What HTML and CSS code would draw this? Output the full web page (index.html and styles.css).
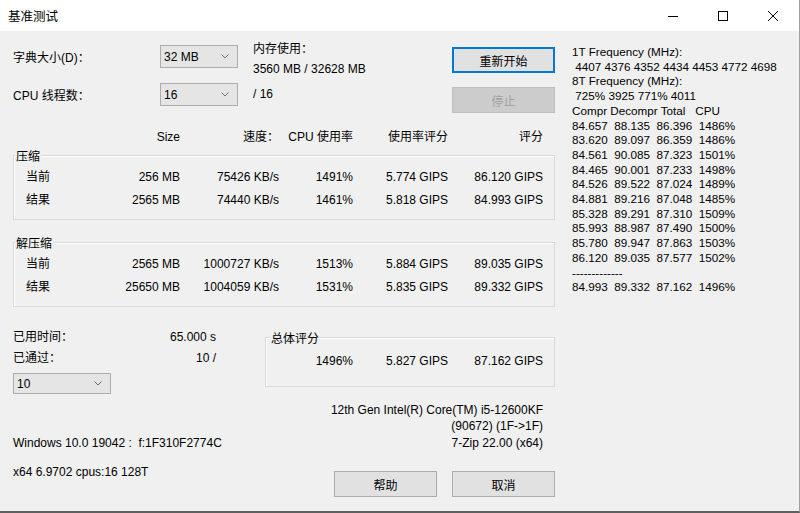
FILE: index.html
```html
<!DOCTYPE html>
<html lang="zh-CN">
<head>
    <meta charset="UTF-8">
    <title>基准测试</title>
    <link rel="stylesheet" href="styles.css">
</head>
<body>
<div class="window">
    <div class="titlebar">
        <span class="title">基准测试</span>
        <div class="caption-buttons">
            <span class="cap-btn">
                <svg width="10" height="10" viewBox="0 0 10 10"><path d="M0 5.5h10" stroke="#000" stroke-width="1"/></svg>
            </span>
            <span class="cap-btn">
                <svg width="10" height="10" viewBox="0 0 10 10"><rect x="0.5" y="0.5" width="9" height="9" fill="none" stroke="#000" stroke-width="1"/></svg>
            </span>
            <span class="cap-btn">
                <svg width="10" height="10" viewBox="0 0 10 10"><path d="M0 0L10 10M10 0L0 10" stroke="#000" stroke-width="1"/></svg>
            </span>
        </div>
    </div>

    <div class="client">
        <div class="main">
            <div class="top">
                <div class="settings">
                    <div class="setting">
                        <span class="setting-label">字典大小(D)：</span>
                        <div class="combo">
                            <span>32 MB</span>
                            <svg width="8" height="5" viewBox="0 0 8 5"><path d="M0.5 0.5L4 4L7.5 0.5" fill="none" stroke="#707070"/></svg>
                        </div>
                    </div>
                    <div class="setting">
                        <span class="setting-label">CPU 线程数：</span>
                        <div class="combo">
                            <span>16</span>
                            <svg width="8" height="5" viewBox="0 0 8 5"><path d="M0.5 0.5L4 4L7.5 0.5" fill="none" stroke="#707070"/></svg>
                        </div>
                    </div>
                </div>
                <div class="info">
                    <div>内存使用：</div>
                    <div>3560 MB / 32628 MB</div>
                    <div class="threads">/ 16</div>
                </div>
                <div class="actions">
                    <button class="btn btn-default">重新开始</button>
                    <button class="btn" disabled>停止</button>
                </div>
            </div>

            <div class="grid-row table-head">
                <span></span>
                <span>Size</span>
                <span>速度：</span>
                <span>CPU 使用率</span>
                <span>使用率评分</span>
                <span>评分</span>
            </div>

            <div class="group group-compress">
                <span class="legend">压缩</span>
                <div class="grid-row">
                    <span>当前</span>
                    <span>256 MB</span>
                    <span>75426 KB/s</span>
                    <span>1491%</span>
                    <span>5.774 GIPS</span>
                    <span>86.120 GIPS</span>
                </div>
                <div class="grid-row">
                    <span>结果</span>
                    <span>2565 MB</span>
                    <span>74440 KB/s</span>
                    <span>1461%</span>
                    <span>5.818 GIPS</span>
                    <span>84.993 GIPS</span>
                </div>
            </div>

            <div class="group group-decompress">
                <span class="legend">解压缩</span>
                <div class="grid-row">
                    <span>当前</span>
                    <span>2565 MB</span>
                    <span>1000727 KB/s</span>
                    <span>1513%</span>
                    <span>5.884 GIPS</span>
                    <span>89.035 GIPS</span>
                </div>
                <div class="grid-row">
                    <span>结果</span>
                    <span>25650 MB</span>
                    <span>1004059 KB/s</span>
                    <span>1531%</span>
                    <span>5.835 GIPS</span>
                    <span>89.332 GIPS</span>
                </div>
            </div>

            <div class="summary">
                <div class="progress">
                    <div class="progress-line">
                        <span>已用时间：</span>
                        <span>65.000 s</span>
                    </div>
                    <div class="progress-line">
                        <span>已通过：</span>
                        <span>10 /</span>
                    </div>
                    <div class="combo combo-passes">
                        <span>10</span>
                        <svg width="8" height="5" viewBox="0 0 8 5"><path d="M0.5 0.5L4 4L7.5 0.5" fill="none" stroke="#707070"/></svg>
                    </div>
                </div>
                <div class="group group-total">
                    <span class="legend legend-total">总体评分</span>
                    <div class="total-row">
                        <span>1496%</span>
                        <span>5.827 GIPS</span>
                        <span>87.162 GIPS</span>
                    </div>
                </div>
            </div>

            <div class="cpu-info">
                <div>12th Gen Intel(R) Core(TM) i5-12600KF</div>
                <div>(90672) (1F-&gt;1F)</div>
            </div>
            <div class="sys-row">
                <span>Windows 10.0 19042 :&nbsp; f:1F310F2774C</span>
                <span>7-Zip 22.00 (x64)</span>
            </div>
            <div class="footer">
                <span class="footer-text">x64 6.9702 cpus:16 128T</span>
                <div class="footer-buttons">
                    <button class="btn">帮助</button>
                    <button class="btn">取消</button>
                </div>
            </div>
        </div>

        <pre class="log">1T Frequency (MHz):
 4407 4376 4352 4434 4453 4772 4698
8T Frequency (MHz):
 725% 3925 771% 4011
Compr Decompr Total   CPU
84.657  88.135  86.396  1486%
83.620  89.097  86.359  1486%
84.561  90.085  87.323  1501%
84.465  90.001  87.233  1498%
84.526  89.522  87.024  1489%
84.881  89.216  87.048  1485%
85.328  89.291  87.310  1509%
85.993  88.987  87.490  1500%
85.780  89.947  87.863  1503%
86.120  89.035  87.577  1502%
-------------
84.993  89.332  87.162  1496%</pre>
    </div>
</div>
</body>
</html>
```

FILE: styles.css
```css
/* dialog window */
body {
    margin: 0;
    padding: 0;
    background-color: #f0f0f0;
    font-family: "Liberation Sans", "Noto Sans CJK SC", sans-serif;
    font-size: 12px;
    color: #000;
}

.window {
    width: 800px;
    height: 513px;
    box-sizing: border-box;
    border-right: 1px solid #a0a0a0;
    border-bottom: 2px solid #5f5f5f;
    background-color: #f0f0f0;
    display: flex;
    flex-direction: column;
    overflow: hidden;
}

.titlebar {
    height: 31px;
    background-color: #fff;
    display: flex;
    align-items: center;
    flex-shrink: 0;
}

.title {
    margin-left: 8px;
    font-size: 12.5px;
}

.caption-buttons {
    margin-left: auto;
    margin-right: 1px;
    display: flex;
    height: 100%;
}

.cap-btn {
    width: 50px;
    height: 100%;
    display: flex;
    align-items: center;
    justify-content: center;
}

.client {
    flex: 1;
    display: flex;
}

.main {
    width: 560px;
    box-sizing: border-box;
    padding: 0 5px 0 13px;
    display: flex;
    flex-direction: column;
}

/* top settings */
.top {
    display: flex;
    align-items: flex-start;
}

.settings {
    margin-top: 14px;
    display: flex;
    flex-direction: column;
    gap: 15px;
}

.setting {
    display: flex;
    align-items: center;
}

.setting-label {
    width: 147px;
}

.combo {
    width: 78px;
    height: 23px;
    box-sizing: border-box;
    border: 1px solid #adadad;
    background-color: #e5e5e5;
    display: flex;
    align-items: center;
    justify-content: space-between;
    padding: 0 8px 0 3px;
}

.combo svg {
    display: block;
}

.info {
    margin-left: 15px;
    margin-top: 8px;
    line-height: 20px;
}

.threads {
    margin-top: 5px;
}

.actions {
    margin-left: auto;
    margin-top: 16px;
    display: flex;
    flex-direction: column;
    gap: 14px;
}

.btn {
    width: 103px;
    height: 26px;
    box-sizing: border-box;
    background-color: #e1e1e1;
    border: 1px solid #adadad;
    color: #000;
    font-family: "Liberation Sans", "Noto Sans CJK SC", sans-serif;
    font-size: 12px;
    padding: 0;
}

.btn-default {
    border: 2px solid #0078d7;
}

.btn:disabled {
    background-color: #cccccc;
    border-color: #bfbfbf;
    color: #a0a0a0;
}

/* result table */
.grid-row {
    display: grid;
    grid-template-columns: 74px 80px 99px 74px 95px 95px;
    line-height: 23px;
    white-space: nowrap;
}

.grid-row span {
    text-align: right;
}

.grid-row span:first-child {
    text-align: left;
}

.table-head {
    margin-top: 16px;
    padding-left: 13px;
    line-height: 16px;
}

.group {
    position: relative;
    border: 1px solid #d9d9d9;
    box-shadow: inset 1px 1px 0 #fff;
}

.legend {
    position: absolute;
    top: -7px;
    left: 1px;
    padding: 0 1px;
    line-height: 16px;
    background-color: #f0f0f0;
}

.legend-total {
    left: 4px;
}

.group-compress,
.group-decompress {
    padding: 10px 0 7px 12px;
}

.group-compress {
    margin-top: 10px;
}

.group-decompress {
    margin-top: 22px;
}

/* summary */
.summary {
    margin-top: 20px;
    display: flex;
    align-items: flex-start;
}

.progress {
    width: 203px;
}

.progress-line {
    display: flex;
    justify-content: space-between;
    line-height: 21px;
}

.combo-passes {
    width: 98px;
    height: 21px;
    margin-top: 4px;
}

.group-total {
    margin-left: 49px;
    margin-top: 10px;
    flex: 1;
    height: 50px;
    box-sizing: border-box;
    padding-top: 15px;
}

.total-row {
    display: grid;
    grid-template-columns: 87px 95px 95px;
    line-height: 16px;
    text-align: right;
}

/* system info */
.cpu-info {
    margin-top: 8px;
    padding-right: 12px;
    text-align: right;
    line-height: 16px;
}

.sys-row {
    margin-top: 1px;
    padding-right: 12px;
    display: flex;
    justify-content: space-between;
    line-height: 16px;
}

.footer {
    margin-top: 13px;
    display: flex;
    align-items: flex-start;
}

.footer-text {
    line-height: 16px;
}

.footer-buttons {
    margin-left: auto;
    margin-top: 7px;
    display: flex;
    gap: 15px;
}

/* frequency log */
.log {
    margin: 0;
    padding: 14px 0 0 12px;
    font-family: "Liberation Sans", sans-serif;
    font-size: 11.7px;
    line-height: 14.7px;
}
```
